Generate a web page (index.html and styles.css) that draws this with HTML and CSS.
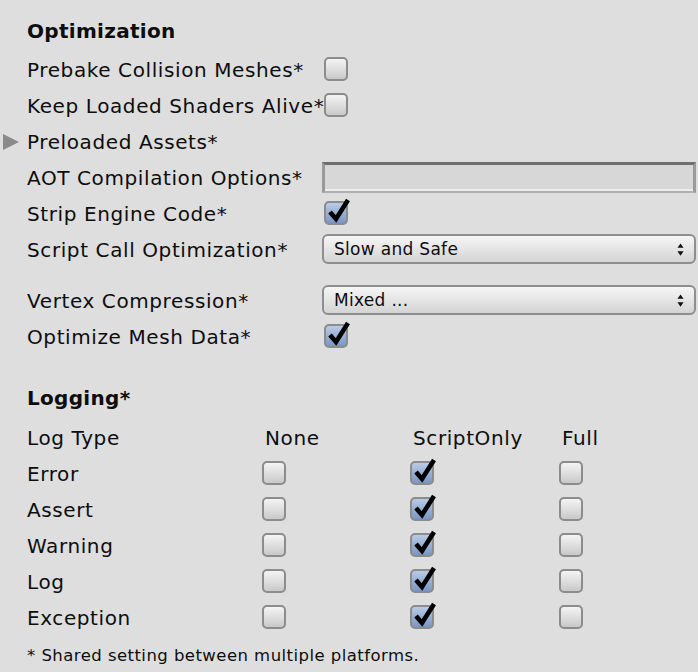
FILE: index.html
```html
<!DOCTYPE html>
<html>
<head>
<meta charset="utf-8">
<link rel="stylesheet" href="styles.css">
</head>
<body>
<div class="panel">
  <div class="title">Optimization</div>
  <div class="row"><span class="label">Prebake Collision Meshes*</span><span class="cb"></span></div>
  <div class="row"><span class="label">Keep Loaded Shaders Alive*</span><span class="cb"></span></div>
  <div class="row"><span class="label foldout"><span class="tri"></span>Preloaded Assets*</span></div>
  <div class="row"><span class="label">AOT Compilation Options*</span><span class="textfield"></span></div>
  <div class="row"><span class="label">Strip Engine Code*</span><span class="cb on"><svg class="tick" viewBox="0 0 26 28"><path d="M5 15 L11 22 L23 3"/></svg></span></div>
  <div class="row"><span class="label">Script Call Optimization*</span><span class="popup">Slow and Safe<svg class="arrows" viewBox="0 0 8 14"><path d="M4 0 L7.5 5 L0.5 5 Z M4 14 L7.5 9 L0.5 9 Z"/></svg></span></div>
  <div class="spacer"></div>
  <div class="row"><span class="label">Vertex Compression*</span><span class="popup">Mixed ...<svg class="arrows" viewBox="0 0 8 14"><path d="M4 0 L7.5 5 L0.5 5 Z M4 14 L7.5 9 L0.5 9 Z"/></svg></span></div>
  <div class="row"><span class="label">Optimize Mesh Data*</span><span class="cb on"><svg class="tick" viewBox="0 0 26 28"><path d="M5 15 L11 22 L23 3"/></svg></span></div>

  <div class="title logging">Logging*</div>
  <div class="logrow head"><span>Log Type</span><span class="hl">None</span><span class="hl">ScriptOnly</span><span class="hl">Full</span></div>
  <div class="logrow"><span>Error</span><span class="cb"></span><span class="cb on"><svg class="tick" viewBox="0 0 26 28"><path d="M5 15 L11 22 L23 3"/></svg></span><span class="cb"></span></div>
  <div class="logrow"><span>Assert</span><span class="cb"></span><span class="cb on"><svg class="tick" viewBox="0 0 26 28"><path d="M5 15 L11 22 L23 3"/></svg></span><span class="cb"></span></div>
  <div class="logrow"><span>Warning</span><span class="cb"></span><span class="cb on"><svg class="tick" viewBox="0 0 26 28"><path d="M5 15 L11 22 L23 3"/></svg></span><span class="cb"></span></div>
  <div class="logrow"><span>Log</span><span class="cb"></span><span class="cb on"><svg class="tick" viewBox="0 0 26 28"><path d="M5 15 L11 22 L23 3"/></svg></span><span class="cb"></span></div>
  <div class="logrow"><span>Exception</span><span class="cb"></span><span class="cb on"><svg class="tick" viewBox="0 0 26 28"><path d="M5 15 L11 22 L23 3"/></svg></span><span class="cb"></span></div>
  <div class="note">* Shared setting between multiple platforms.</div>
</div>
</body>
</html>
```

FILE: styles.css
```css
html, body {
  margin: 0;
  padding: 0;
  background: #dedede;
}
body {
  width: 698px;
  height: 672px;
  overflow: hidden;
  font-family: "DejaVu Sans", "Liberation Sans", sans-serif;
  font-size: 20px;
  letter-spacing: 0.6px;
  color: #0d0d0d;
}
.panel {
  padding: 10px 2px 0 27px;
}
.title {
  height: 41px;
  display: flex;
  align-items: center;
  font-weight: bold;
  letter-spacing: 0.3px;
}
.row {
  height: 36px;
  display: grid;
  grid-template-columns: 295px 1fr;
  align-items: center;
}
.label {
  white-space: nowrap;
  position: relative;
  padding-top: 1px;
}
.foldout .tri {
  position: absolute;
  left: -24px;
  top: 50%;
  margin-top: -7px;
  width: 0;
  height: 0;
  border-top: 8px solid transparent;
  border-bottom: 8px solid transparent;
  border-left: 16px solid #8a8a8a;
}
.spacer {
  height: 15px;
}
.cb {
  position: relative;
  box-sizing: border-box;
  width: 24px;
  height: 24px;
  margin-left: 2px;
  border: 2px solid #8c8c8c;
  border-radius: 5px;
  background: linear-gradient(#f4f4f4, #c9c9c9);
}
.cb.on {
  background: linear-gradient(#b9cbe6, #7996c4);
}
.tick {
  position: absolute;
  left: -1px;
  top: -6px;
  width: 26px;
  height: 28px;
  overflow: visible;
}
.tick path {
  fill: none;
  stroke: #000;
  stroke-width: 4.6;
  stroke-linecap: butt;
  stroke-linejoin: miter;
}
.textfield {
  box-sizing: border-box;
  height: 31px;
  border-top: 3px solid #6f6f6f;
  border-left: 3px solid #9a9a9a;
  border-right: 3px solid #9a9a9a;
  border-bottom: 2px solid #b0b0b0;
  background: #d7d7d7;
  box-shadow: inset 0 -2px 0 #ececec;
}
.popup {
  box-sizing: border-box;
  height: 30px;
  border: 2px solid #8e8e8e;
  border-radius: 6px;
  background: linear-gradient(#f6f6f6, #d4d4d4);
  display: flex;
  align-items: center;
  justify-content: space-between;
  padding: 0 10px 0 10px;
  font-size: 17px;
  letter-spacing: 0.3px;
}
.arrows {
  width: 7px;
  height: 13px;
}
.arrows path {
  fill: #111;
}
.logging {
  margin-top: 23px;
}
.logrow {
  height: 36px;
  display: grid;
  grid-template-columns: 235px 148px 149px 1fr;
  align-items: center;
}
.logrow > span:first-child {
  padding-top: 1px;
}
.head {
  margin-top: 1px;
}
.hl {
  padding-left: 3px;
  padding-top: 1px;
}
.logrow .cb {
  margin-left: 0;
}
.note {
  margin-top: 11px;
  font-size: 16.5px;
  letter-spacing: 0.45px;
}
```
